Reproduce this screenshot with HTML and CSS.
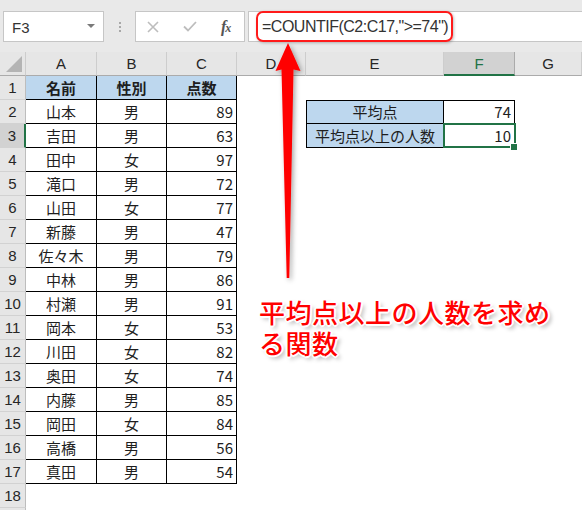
FILE: index.html
```html
<!DOCTYPE html>
<html lang="ja">
<head>
<meta charset="utf-8">
<title>COUNTIF</title>
<link rel="stylesheet" href="styles.css">
</head>
<body>
<div class="app">
  <div class="toolbar">
    <div class="namebox"><span class="nbtext">F3</span><span class="dd"></span></div>
    <div class="grip"><i></i><i></i><i></i></div>
    <div class="fxbtns">
      <svg class="ico-x" width="12" height="12" viewBox="0 0 12 12"><path d="M1 1L11 11M11 1L1 11" stroke="#bdbdbd" stroke-width="1.6" fill="none"/></svg>
      <svg class="ico-ok" width="14" height="11" viewBox="0 0 14 11"><path d="M1 5.5L5 9.5L13 1" stroke="#bdbdbd" stroke-width="1.8" fill="none"/></svg>
      <span class="fx">f<span class="fxx">x</span></span>
    </div>
    <div class="formula"><span class="ftext">=COUNTIF(C2:C17,"&gt;=74")</span></div>
  </div>

  <div class="sheet">
    <div class="ch corner"><span class="tri"></span></div>
    <div class="ch">A</div><div class="ch">B</div><div class="ch">C</div><div class="ch">D</div><div class="ch">E</div><div class="ch act">F</div><div class="ch">G</div>

    <div class="rh">1</div>
    <div class="t hd">名前</div><div class="t hd">性別</div><div class="t hd">点数</div>
    <div class="c"></div><div class="c"></div><div class="c"></div><div class="c"></div>

    <div class="rh">2</div>
    <div class="t ctr">山本</div><div class="t ctr">男</div><div class="t num">89</div>
    <div class="c"></div><div class="t bl bt blue ctr">平均点</div><div class="t bt num">74</div><div class="c"></div>

    <div class="rh act">3</div>
    <div class="t ctr">吉田</div><div class="t ctr">男</div><div class="t num">63</div>
    <div class="c"></div><div class="t bl blue ctr">平均点以上の人数</div><div class="t num sel">10</div><div class="c"></div>

    <div class="rh">4</div>
    <div class="t ctr">田中</div><div class="t ctr">女</div><div class="t num">97</div>
    <div class="c"></div><div class="c"></div><div class="c"></div><div class="c"></div>

    <div class="rh">5</div>
    <div class="t ctr">滝口</div><div class="t ctr">男</div><div class="t num">72</div>
    <div class="c"></div><div class="c"></div><div class="c"></div><div class="c"></div>

    <div class="rh">6</div>
    <div class="t ctr">山田</div><div class="t ctr">女</div><div class="t num">77</div>
    <div class="c"></div><div class="c"></div><div class="c"></div><div class="c"></div>

    <div class="rh">7</div>
    <div class="t ctr">新藤</div><div class="t ctr">男</div><div class="t num">47</div>
    <div class="c"></div><div class="c"></div><div class="c"></div><div class="c"></div>

    <div class="rh">8</div>
    <div class="t ctr">佐々木</div><div class="t ctr">男</div><div class="t num">79</div>
    <div class="c"></div><div class="c"></div><div class="c"></div><div class="c"></div>

    <div class="rh">9</div>
    <div class="t ctr">中林</div><div class="t ctr">男</div><div class="t num">86</div>
    <div class="c"></div><div class="c"></div><div class="c"></div><div class="c"></div>

    <div class="rh">10</div>
    <div class="t ctr">村瀬</div><div class="t ctr">男</div><div class="t num">91</div>
    <div class="c"></div><div class="c"></div><div class="c"></div><div class="c"></div>

    <div class="rh">11</div>
    <div class="t ctr">岡本</div><div class="t ctr">女</div><div class="t num">53</div>
    <div class="c"></div><div class="c"></div><div class="c"></div><div class="c"></div>

    <div class="rh">12</div>
    <div class="t ctr">川田</div><div class="t ctr">女</div><div class="t num">82</div>
    <div class="c"></div><div class="c"></div><div class="c"></div><div class="c"></div>

    <div class="rh">13</div>
    <div class="t ctr">奥田</div><div class="t ctr">女</div><div class="t num">74</div>
    <div class="c"></div><div class="c"></div><div class="c"></div><div class="c"></div>

    <div class="rh">14</div>
    <div class="t ctr">内藤</div><div class="t ctr">男</div><div class="t num">85</div>
    <div class="c"></div><div class="c"></div><div class="c"></div><div class="c"></div>

    <div class="rh">15</div>
    <div class="t ctr">岡田</div><div class="t ctr">女</div><div class="t num">84</div>
    <div class="c"></div><div class="c"></div><div class="c"></div><div class="c"></div>

    <div class="rh">16</div>
    <div class="t ctr">高橋</div><div class="t ctr">男</div><div class="t num">56</div>
    <div class="c"></div><div class="c"></div><div class="c"></div><div class="c"></div>

    <div class="rh">17</div>
    <div class="t ctr">真田</div><div class="t ctr">男</div><div class="t num">54</div>
    <div class="c"></div><div class="c"></div><div class="c"></div><div class="c"></div>

    <div class="rh">18</div>
    <div class="c"></div><div class="c"></div><div class="c"></div><div class="c"></div><div class="c"></div><div class="c"></div><div class="c"></div>

    <div class="rh"></div>
    <div class="c"></div><div class="c"></div><div class="c"></div><div class="c"></div><div class="c"></div><div class="c"></div><div class="c"></div>
  </div>

  <svg class="arrow" width="582" height="510" viewBox="0 0 582 510">
    <defs>
      <filter id="sh" x="-50%" y="-10%" width="200%" height="120%">
        <feDropShadow dx="2" dy="2" stdDeviation="2.5" flood-color="#000" flood-opacity="0.35"/>
      </filter>
    </defs>
    <path d="M288 43 L300.5 71 L293.5 69.5 L289.3 278 L286.7 278 L281.5 69.5 L275.5 71 Z" fill="#ff0000" filter="url(#sh)"/>
  </svg>

  <div class="note">平均点以上の人数を求め<br>る関数</div>
</div>
</body>
</html>
```

FILE: styles.css
```css
* { box-sizing: border-box; }
html, body { margin: 0; padding: 0; }
body {
  width: 582px;
  height: 510px;
  overflow: hidden;
  background: #ffffff;
  font-family: "Noto Sans CJK JP", sans-serif;
  color: #1e1e1e;
}
.app {
  position: relative;
  width: 582px;
  height: 510px;
  overflow: hidden;
}

/* ---------- toolbar ---------- */
.toolbar {
  height: 52px;
  background: #e9e9e9;
  display: flex;
  align-items: flex-start;
  padding-top: 11px;
  padding-left: 3px;
}
.namebox {
  width: 101px;
  height: 31px;
  background: #fff;
  border: 1px solid #c6c6c6;
  display: flex;
  align-items: center;
  justify-content: space-between;
  padding: 0 8px 0 8px;
  font-family: "Liberation Sans", Arial, sans-serif;
  font-size: 15px;
  color: #333;
}
.nbtext { padding-top: 2px; }
.dd {
  width: 0;
  height: 0;
  border-left: 4px solid transparent;
  border-right: 4px solid transparent;
  border-top: 4px solid #7a7a7a;
  margin-top: -2px;
}
.grip {
  width: 31px;
  height: 31px;
  display: flex;
  flex-direction: column;
  align-items: center;
  justify-content: center;
  gap: 2px;
}
.grip i {
  display: block;
  width: 2px;
  height: 2px;
  background: #a8a8a8;
}
.fxbtns {
  width: 110px;
  height: 31px;
  background: #fff;
  border: 1px solid #c6c6c6;
  display: flex;
  align-items: center;
  padding-left: 11px;
}
.ico-x { display: block; }
.ico-ok { display: block; margin-left: 24px; }
.fx {
  margin-left: 24px;
  font-family: "Liberation Serif", "Times New Roman", serif;
  font-style: italic;
  font-weight: 700;
  font-size: 16px;
  color: #555;
  letter-spacing: -1px;
}
.fxx { font-size: 12px; }
.formula {
  margin-left: 3px;
  flex: 1;
  height: 31px;
  background: #fff;
  border: 1px solid #c6c6c6;
  border-right: none;
  padding-left: 7px;
  display: flex;
  align-items: stretch;
}
.ftext {
  margin-top: -1px;
  height: 31px;
  width: 197px;
  border: 2px solid #ff1a1a;
  border-radius: 7px;
  box-shadow: 1px 1px 3px rgba(0,0,0,0.25);
  padding-left: 4px;
  display: flex;
  align-items: center;
  font-family: "Liberation Sans", Arial, sans-serif;
  font-size: 16px;
  letter-spacing: -0.5px;
  color: #333;
  white-space: nowrap;
}

/* ---------- sheet ---------- */
.sheet {
  display: grid;
  grid-template-columns: 26px 71px 70px 70px 69px 138px 71px 67px;
  grid-auto-rows: 24px;
}
.ch {
  background: #e6e6e6;
  border-right: 1px solid #cdcdcd;
  border-bottom: 1px solid #ababab;
  font-family: "Liberation Sans", Arial, sans-serif;
  font-size: 15px;
  color: #262626;
  text-align: center;
  line-height: 23px;
}
.ch.act {
  background: #d2d2d2;
  border-bottom: 2px solid #217346;
  color: #217346;
  border-right-color: #ababab;
}
.corner { position: relative; }
.tri {
  position: absolute;
  right: 3px;
  bottom: 3px;
  width: 0;
  height: 0;
  border-left: 16px solid transparent;
  border-bottom: 16px solid #b4b4b4;
}
.rh {
  background: #e6e6e6;
  border-right: 1px solid #bdbdbd;
  border-bottom: 1px solid #d2d2d2;
  font-family: "Liberation Sans", Arial, sans-serif;
  font-size: 15px;
  color: #262626;
  text-align: center;
  line-height: 24px;
}
.rh.act {
  background: #d2d2d2;
  border-right: 2px solid #217346;
}
.c { background: #fff; }
.t {
  background: #fff;
  border-right: 1px solid #000;
  border-bottom: 1px solid #000;
  font-size: 15px;
  line-height: 23px;
  color: #1e1e1e;
  white-space: nowrap;
  overflow: hidden;
}
.bl { border-left: 1px solid #000; }
.bt { border-top: 1px solid #000; line-height: 22px; }
.hd {
  background: #bdd7ee;
  font-weight: 700;
  text-align: center;
}
.blue { background: #bdd7ee; }
.ctr { text-align: center; }
.num { text-align: right; padding-right: 3px; }
.sel { position: relative; overflow: visible; }
.sel::before {
  content: "";
  position: absolute;
  left: -1px;
  top: -1px;
  right: -2px;
  bottom: -1px;
  border: 2px solid #217346;
}
.sel::after {
  content: "";
  position: absolute;
  right: -4px;
  bottom: -4px;
  width: 6px;
  height: 6px;
  background: #217346;
  border: 1px solid #fff;
}

/* ---------- annotations ---------- */
.arrow {
  position: absolute;
  left: 0;
  top: 0;
  pointer-events: none;
}
.note {
  position: absolute;
  left: 259px;
  top: 296px;
  font-size: 26px;
  line-height: 31px;
  font-weight: 500;
  letter-spacing: 0.5px;
  color: #ff0000;
  text-shadow:
    -1px -1px 0 #fff, 1px -1px 0 #fff, -1px 1px 0 #fff, 1px 1px 0 #fff,
    0 -2px 0 #fff, 0 2px 0 #fff, -2px 0 0 #fff, 2px 0 0 #fff,
    3px 3px 4px rgba(0,0,0,0.35);
  white-space: nowrap;
}
```
